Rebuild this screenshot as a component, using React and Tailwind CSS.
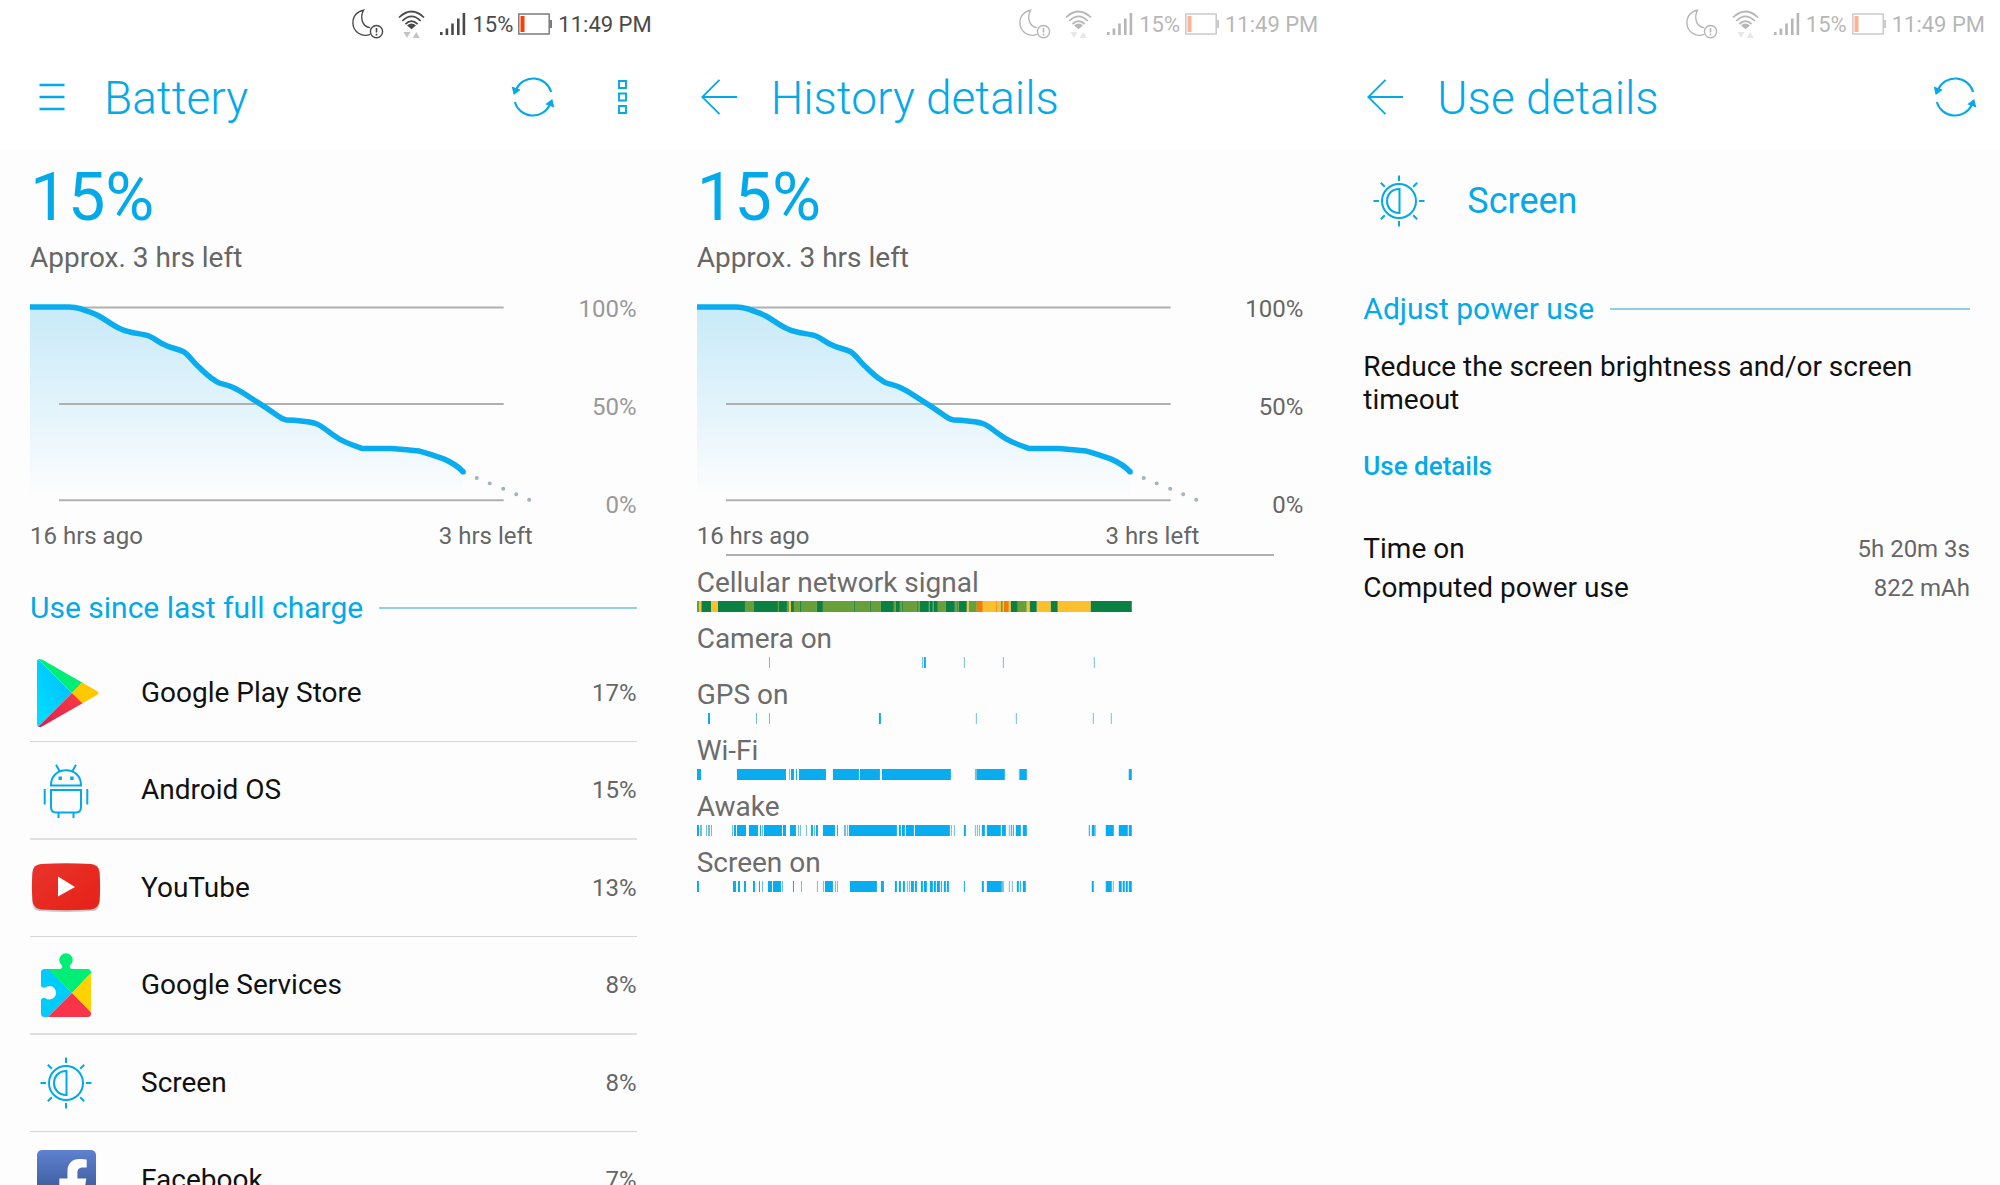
import { FaFacebookF } from "react-icons/fa";

const StatusBar = ({ dim }) => (
  <div className="bg-white">
    <div
      className={`flex h-[46px] items-center justify-end pt-[2px] pr-[15px] text-[22px] text-[#4a4a4a] ${dim ? "opacity-40" : ""}`}
    >
      <svg className="h-[30px] w-8" viewBox="0 0 32 30" fill="none" stroke="currentColor" strokeWidth="1.4">
        <path d="M18.200 25.400A12.600 12.600 0 0 1 .9 14C.8 7 5.500 2 11.600 1.200 8 7.500 9.500 17.800 18.200 18.600" />
        <circle cx="24.500" cy="22.600" r="6.100" />
        <path d="M24.500 19v4.500M24.500 24.700v1.700" strokeWidth="1.600" />
      </svg>
      <svg className="ml-[14px] h-[30px] w-[27px]" viewBox="0 0 27 30" fill="none" stroke="currentColor" strokeWidth="1.700">
        <path d="M1 8.500Q13.500-3.500 26 8.500M4.300 12Q13.500 2.800 22.700 12M7.400 15.200Q13.500 9 19.600 15.200" />
        <path d="M9 16.400Q13.500 12.500 18 16.400L13.500 20.300Z" fill="currentColor" stroke="none" />
        <path d="M5.500 23h7l-3.500 6zM14.800 29h7l-3.500-6z" fill="#c4c4c4" stroke="none" />
      </svg>
      <svg className="ml-[15px] h-6 w-[26px]" viewBox="0 0 26 24" fill="currentColor">
        <path d="M0 20h2.600v3H0zM5.600 16.500h2.600V23H5.600zM11.200 11.500h2.600V23h-2.600zM17 6.500h2.600V23H17zM22.600 1h2.600v22h-2.600z" />
      </svg>
      <span className="ml-[6px]">15%</span>
      <svg className="ml-[5px] h-[22px] w-[34px]" viewBox="0 0 34 22" fill="none" stroke="#7c7c7c" strokeWidth="1.500">
        <path d="M.8 1h30.400v20H.8z" />
        <path d="M2.500 3h4v16h-4z" fill="#ff3d00" stroke="none" />
        <path d="M32.800 7v8" strokeWidth="2.400" />
      </svg>
      <span className="ml-[6px]">11:49 PM</span>
    </div>
  </div>
);

const MenuIcon = () => (
  <svg className="h-9 w-9" viewBox="0 0 36 36" stroke="currentColor" strokeWidth="2.500">
    <path d="M5.500 6h25M5.500 18h25M5.500 30h25" />
  </svg>
);

const BackIcon = () => (
  <svg className="h-9 w-9" viewBox="0 0 36 36" fill="none" stroke="currentColor" strokeWidth="1.800">
    <path d="M18.500.8L1.300 18l17.200 17.200M1.300 18H36" />
  </svg>
);

const RefreshIcon = () => (
  <svg className="h-11 w-11" viewBox="0 0 44 44" fill="none" stroke="currentColor" strokeWidth="2">
    <path d="M40.200 17A18.800 18.800 0 0 0 5 14.500M3.800 27A18.800 18.800 0 0 0 39 29.500" />
    <path d="M.7 11.500l9 3.200-7 5.300zM43.300 32.500l-9-3.200 7-5.300z" fill="currentColor" stroke="none" />
  </svg>
);

const MoreIcon = () => (
  <svg className="h-11 w-11" viewBox="0 0 44 44" fill="none" stroke="currentColor" strokeWidth="1.900">
    <path d="M19 6h7v7h-7zM19 18.500h7v7h-7zM19 31h7v7h-7z" />
  </svg>
);

const Header = ({ title, back, children }) => (
  <header className="flex h-[104px] items-center bg-white pr-[23px] pl-[34px] text-[#03a9e9]">
    <button type="button" aria-label={back ? "Back" : "Menu"} className="mr-[34px] mb-[3px]">
      {back ? <BackIcon /> : <MenuIcon />}
    </button>
    <h1 className="flex-1 text-[46px] leading-none font-light">{title}</h1>
    <div className="mb-[3px] flex gap-[45px]">{children}</div>
  </header>
);

const RefreshButton = () => (
  <button type="button" aria-label="Refresh">
    <RefreshIcon />
  </button>
);

const CURVE =
  "M0 3H39C44 3 47 3.700 50 4.700C57 7 63 9 69 12C77 16.500 84 22.500 92 25.500C101 29.500 112 29.500 119 32C126 35 130 39.500 136 41.500C144 45 149 45 154 48C159 51 163 58 170 64C177 71 181 74 185 76.500C189 80 195 80 201 82.500C207 85 212 88 218 92L235 103L249 112.500C252 115 254 116 257 116C264 116.200 267 116.500 271 117C278 118 283 118 288 120.500C294 123.500 300 129 307 133.500C313 138 325 142 332 144.500H361C370 145 379 146 389 147C397 149 405 152 414 155C422 158.500 428 162 433.500 168";

const BatteryChart = ({ id, labelClass }) => (
  <div>
    <p className="text-[67px] leading-[72px] text-[#03a9e9]">15%</p>
    <p className="mt-[9px] text-[28px] leading-8 text-[#666]">Approx. 3 hrs left</p>
    <div className="mt-[21px] flex">
      <div className="flex-1">
        <svg className="mt-[9px] h-auto w-full" viewBox="0 0 503 200" fill="none" role="img" aria-label="Battery level">
          <defs>
            <linearGradient id={id} x1="0" y1="0" x2="0" y2="1">
              <stop offset="0" stopColor="#c8eaf8" />
              <stop offset="0.550" stopColor="#e4f4fb" />
              <stop offset="1" stopColor="#fdfdfd" />
            </linearGradient>
          </defs>
          <path d={`${CURVE}V194H0Z`} fill={`url(#${id})`} />
          <path d="M39 3.500H474M29 100H474M29 196.500H474" stroke="#b0b0b0" strokeWidth="2" />
          <path d={CURVE} stroke="#09acee" strokeWidth="5.500" strokeLinejoin="round" />
          <circle cx="433.500" cy="168" r="2.700" fill="#09acee" />
          <path d="M447 174h.1M460 179.500h.1M473.500 185h.1M486.500 190.500h.1M499.500 196h.1" stroke="#a3b4ba" strokeWidth="4" strokeLinecap="round" />
        </svg>
      </div>
      <div className={`flex h-[222px] w-[104px] flex-col justify-between pt-[2px] text-right text-[24px] leading-6 ${labelClass}`}>
        <span>100%</span>
        <span>50%</span>
        <span>0%</span>
      </div>
    </div>
    <div className="mt-[5px] mr-[104px] flex justify-between text-[24px] leading-7 text-[#666]">
      <span>16 hrs ago</span>
      <span>3 hrs left</span>
    </div>
  </div>
);

const SectionTitle = ({ children }) => (
  <div className="mt-[41px] flex items-center gap-4">
    <h2 className="text-[30px] leading-[34px] text-[#03a9e9]">{children}</h2>
    <div className="h-[2px] flex-1 bg-[#8fd0e2]" />
  </div>
);

const PlayStoreIcon = () => (
  <svg className="ml-1 h-[70px] w-[62px]" viewBox="0 0 62 70">
    <defs>
      <linearGradient id="playBlue" x1="1" y1="0" x2="0" y2="1">
        <stop offset="0" stopColor="#00b9ff" />
        <stop offset="1" stopColor="#00e2ff" />
      </linearGradient>
      <linearGradient id="playRed" x1="1" y1="0" x2="0" y2="1">
        <stop offset="0" stopColor="#ff3a44" />
        <stop offset="1" stopColor="#d6204f" />
      </linearGradient>
      <clipPath id="playShape">
        <path d="M0 4Q0-.5 5 1.500L60 33Q63 35 60 37L5 68.500Q0 70.500 0 66Z" />
      </clipPath>
    </defs>
    <g clipPath="url(#playShape)">
      <path d="M0 0L35 35 0 70Z" fill="url(#playBlue)" />
      <path d="M0 0H10L46 24 35 35Z" fill="#00ee76" />
      <path d="M46 23L64 35 46 47 35 35Z" fill="#ffc800" />
      <path d="M0 70H10L46 46 35 35Z" fill="url(#playRed)" />
    </g>
  </svg>
);

const AndroidIcon = () => (
  <svg className="h-14 w-12" viewBox="0 0 48 56" fill="none" stroke="#03a9e9" strokeWidth="2">
    <path d="M9 23.500C9 14 15.500 8.300 24 8.300S39 14 39 23.500ZM9 28H39V45Q39 50.500 34 50.500H14Q9 50.500 9 45Z" />
    <path d="M14 2.800L17.500 9M34 2.800L30.500 9M2.700 27V42.500M45.300 27V42.500M16.500 51v5M31.500 51v5" />
    <path d="M18.200 14.500v3.400M29.900 14.500v3.400" strokeWidth="3.400" />
  </svg>
);

const YouTubeIcon = () => (
  <svg className="h-[50px] w-[70px]" viewBox="0 0 70 50">
    <defs>
      <linearGradient id="ytRed" x1="0" y1="0" x2="1" y2="1">
        <stop offset="0" stopColor="#e8342c" />
        <stop offset="1" stopColor="#e62117" />
      </linearGradient>
    </defs>
    <path d="M8 3Q35 1.500 62 3 67.500 3.500 68.500 10 69.700 26 68.500 41 67.500 47.500 62 48 35 49.800 8 48 2.500 47.500 1.500 41 .3 26 1.500 10 2.500 3.500 8 3Z" fill="#c9c9c9" />
    <path d="M10 1Q35-.5 60 1 67.500 1.500 68.500 9 69.700 24 68.500 38 67.500 45.500 60 46.500 35 48 10 46.500 2.500 45.500 1.500 38 .3 24 1.500 9 2.500 1.500 10 1Z" fill="url(#ytRed)" />
    <path d="M27 13.500L44 24 27 33.500Z" fill="#fff" />
  </svg>
);

const ServicesIcon = () => (
  <svg className="h-16 w-[50px]" viewBox="0 0 50 64">
    <defs>
      <clipPath id="puzzle">
        <path d="M3.500 16H19.500Q22 15 20.800 12.200A6.700 6.700 0 1 1 29.200 12.200Q28 15 30.500 16H46.500Q50 16 50 19.500V60.500Q50 64 46.500 64H3.500Q0 64 0 60.500V46.500Q1.500 44 4.200 44.900A6.700 6.700 0 1 0 4.200 34.500Q1.500 35.500 0 33V19.500Q0 16 3.500 16Z" />
      </clipPath>
    </defs>
    <g clipPath="url(#puzzle)">
      <path d="M0 8L31 40 7 64H0Z" fill="#00ccfc" />
      <path d="M0 0H50V20L31 40 7 16Z" fill="#00ee76" />
      <path d="M50 20L31 40 50 59.500Z" fill="#ffd200" />
      <path d="M31 40L50 59.500V64H7Z" fill="#f9344a" />
    </g>
  </svg>
);

const ScreenIcon = () => (
  <svg className="h-[52px] w-[52px]" viewBox="0 0 52 52" fill="none" stroke="#03a9e9" strokeWidth="2">
    <circle cx="26" cy="26" r="17" />
    <path d="M26.500 14V38C18 38 14 32 14 26S18 14 26.500 14Z" />
    <path d="M26 .5v5.500M26 46v5.500M.5 26h5.500M46 26h5.500M7.800 7.800l4 4M40.200 40.200l4 4M7.800 44.200l4-4M40.200 11.800l4-4" />
  </svg>
);

const FacebookIcon = () => (
  <div className="flex h-[60px] w-[59px] items-end justify-end overflow-hidden rounded-[5px] bg-gradient-to-b from-[#5f82d0] to-[#2f4a86] pr-[7px]">
    <FaFacebookF className="h-[51px] w-8 text-white" />
  </div>
);

const apps = [
  { name: "Google Play Store", usage: "17%", Icon: PlayStoreIcon },
  { name: "Android OS", usage: "15%", Icon: AndroidIcon },
  { name: "YouTube", usage: "13%", Icon: YouTubeIcon },
  { name: "Google Services", usage: "8%", Icon: ServicesIcon },
  { name: "Screen", usage: "8%", Icon: ScreenIcon },
  { name: "Facebook", usage: "7%", Icon: FacebookIcon },
];

const SIGNAL_COLORS = { d: "#0b8043", g: "#689f38", y: "#fbc02d", o: "#f57c00" };

// Each entry is a start position and a signal level, running up to the next entry
const signal = [
  [0, "g"], [2, "y"], [4, "o"], [5, "d"], [14, "y"], [21, "d"], [48, "g"], [57, "d"], [81, "g"], [82, "d"],
  [90, "g"], [92, "y"], [94, "d"], [97, "g"], [103, "d"], [104, "g"], [120, "d"], [126, "g"], [157, "d"],
  [158, "g"], [173, "d"], [174, "g"], [184, "d"], [197, "g"], [199, "d"], [203, "g"], [205, "d"], [206, "g"],
  [220, "d"], [221, "g"], [223, "d"], [232, "g"], [233, "d"], [236, "g"], [237, "d"], [241, "g"], [249, "d"],
  [258, "g"], [260, "d"], [261, "g"], [262, "d"], [270, "y"], [272, "g"], [280, "o"], [286, "y"], [299, "o"],
  [300, "y"], [304, "g"], [306, "y"], [307, "o"], [312, "y"], [314, "d"], [321, "g"], [330, "y"], [333, "d"],
  [340, "y"], [354, "d"], [361, "y"], [394, "d"], [435, null],
];

// Start, width and an optional flag for the fainter short events
const events = [
  { name: "Camera on", bars: [[72, 1, 1], [225, 1, 1], [227, 2], [267, 1, 1], [306, 1, 1], [397, 1, 1]] },
  {
    name: "GPS on",
    bars: [[11, 2], [59, 1, 1], [72, 1, 1], [182, 2], [279, 1, 1], [319, 1, 1], [396, 1, 1], [414, 1, 1]],
  },
  {
    name: "Wi-Fi",
    bars: [
      [0, 4], [40, 49], [92, 1, 1], [94, 3], [99, 1], [102, 27], [136, 26], [163, 20], [185, 69], [278, 2, 1],
      [280, 28], [322, 1, 1], [323, 7], [432, 3],
    ],
  },
  {
    name: "Awake",
    bars: [
      [0, 2], [3, 2, 1], [9, 1, 1], [11, 2, 1], [14, 1, 1], [35, 1, 1], [37, 2], [40, 9], [52, 9], [63, 1],
      [65, 1, 1], [67, 18], [86, 3], [93, 6], [101, 1, 1], [103, 1, 1], [109, 1, 1], [114, 2], [117, 1, 1],
      [119, 2], [126, 12], [140, 1], [147, 2, 1], [150, 1, 1], [152, 48], [202, 2], [205, 3], [209, 8],
      [218, 35], [254, 1, 1], [257, 1, 1], [267, 2], [278, 1, 1], [280, 1, 1], [282, 1, 1], [285, 3], [290, 14],
      [305, 4], [312, 1, 1], [314, 1], [316, 1], [319, 5], [326, 4], [392, 1], [395, 3], [398, 1, 1], [409, 8],
      [422, 9], [432, 3],
    ],
  },
  {
    name: "Screen on",
    bars: [
      [0, 2], [36, 3], [41, 2], [47, 2], [56, 2], [62, 1], [65, 1, 1], [71, 4], [76, 8], [85, 1, 1], [96, 1],
      [104, 1, 1], [120, 1, 1], [126, 1, 1], [128, 8], [138, 1, 1], [140, 1, 1], [153, 27], [184, 3], [198, 2],
      [202, 2], [206, 2], [210, 1, 1], [212, 1, 1], [214, 3], [218, 2], [224, 2], [227, 3], [233, 3], [237, 2],
      [240, 3], [244, 1], [247, 2], [250, 2], [267, 1], [285, 2], [290, 15], [305, 2, 1], [312, 1, 1],
      [315, 1, 1], [320, 2], [323, 1], [326, 3], [395, 2], [409, 6], [416, 1, 1], [422, 3], [426, 2], [429, 2],
      [432, 3],
    ],
  },
];

const Timeline = ({ name, children }) => (
  <li className="pb-[11px]">
    <p className="text-[28px] leading-8 text-[#6c6c6c]">{name}</p>
    <svg className="mt-[2px] block h-[11px] w-full" viewBox="0 0 607 11" preserveAspectRatio="none">
      {children}
    </svg>
  </li>
);

const BatteryScreen = () => (
  <section className="h-full overflow-hidden">
    <StatusBar />
    <Header title="Battery">
      <RefreshButton />
      <button type="button" aria-label="More options">
        <MoreIcon />
      </button>
    </Header>
    <div className="px-[30px] pt-[11px]">
      <BatteryChart id="levelBattery" labelClass="text-[#999]" />
      <SectionTitle>Use since last full charge</SectionTitle>
      <ul className="mt-5">
        {apps.map(({ name, usage, Icon }) => (
          <li key={name} className="box-content flex h-24 items-center border-b border-[#d6d6d6] even:border-b-2 even:border-[#e0e0e0]">
            <div className="flex w-[72px] justify-center">
              <Icon />
            </div>
            <span className="ml-[39px] flex-1 text-[28px] text-[#111]">{name}</span>
            <span className="text-[24px] text-[#666]">{usage}</span>
          </li>
        ))}
      </ul>
    </div>
  </section>
);

const HistoryScreen = () => (
  <section className="h-full overflow-hidden">
    <StatusBar dim />
    <Header title="History details" back />
    <div className="px-[30px] pt-[11px]">
      <BatteryChart id="levelHistory" labelClass="text-[#666]" />
      <div className="mt-1 mr-[29px] ml-[29px] h-[2px] bg-[#b0b0b0]" />
      <ul className="mt-[11px]">
        <Timeline name="Cellular network signal">
          {signal.slice(0, -1).map(([x, level], i) => (
            <rect key={x} x={x} width={signal[i + 1][0] - x} height="11" fill={SIGNAL_COLORS[level]} />
          ))}
        </Timeline>
        {events.map(({ name, bars }) => (
          <Timeline key={name} name={name}>
            {bars.map(([x, width, faint]) => (
              <rect key={x} x={x} width={width} height="11" fill={faint ? "#6fc0da" : "#09acee"} />
            ))}
          </Timeline>
        ))}
      </ul>
    </div>
  </section>
);

const UseScreen = () => (
  <section className="h-full overflow-hidden">
    <StatusBar dim />
    <Header title="Use details" back>
      <RefreshButton />
    </Header>
    <div className="px-[30px] text-[28px] text-[#111]">
      <div className="flex h-[101px] items-center">
        <div className="flex w-[72px] justify-center">
          <ScreenIcon />
        </div>
        <h2 className="ml-8 text-[36px] text-[#03a9e9]">Screen</h2>
      </div>
      <SectionTitle>Adjust power use</SectionTitle>
      <p className="mt-6 leading-[33px]">Reduce the screen brightness and/or screen timeout</p>
      <h3 className="mt-[34px] text-[26px] leading-8 font-medium text-[#03a9e9]">Use details</h3>
      <dl className="mt-[51px] flex flex-col gap-[7px] leading-8">
        <div className="flex justify-between">
          <dt>Time on</dt>
          <dd className="text-[24px] text-[#666]">5h 20m 3s</dd>
        </div>
        <div className="flex justify-between">
          <dt>Computed power use</dt>
          <dd className="text-[24px] text-[#666]">822 mAh</dd>
        </div>
      </dl>
    </div>
  </section>
);

const App = () => {
  return (
    <main className="grid h-screen grid-cols-3 overflow-hidden bg-[#fdfdfd] font-['Roboto',sans-serif]">
      <BatteryScreen />
      <HistoryScreen />
      <UseScreen />
    </main>
  );
};

export default App;
